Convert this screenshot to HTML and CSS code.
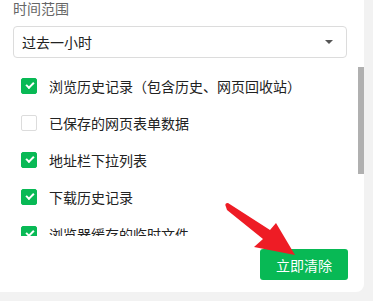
FILE: index.html
```html
<!DOCTYPE html>
<html lang="zh-CN">
  <head>
    <meta charset="UTF-8" />
    <title>清除浏览数据</title>
    <link rel="stylesheet" href="styles.css">
  </head>
  <body>
    <div class="panel">
      <div class="label">时间范围</div>
      <div class="select">
        <span>过去一小时</span>
        <span class="caret"></span>
      </div>

      <div class="list">
        <div class="row"><span class="box checked"></span>浏览历史记录（包含历史、网页回收站）</div>
        <div class="row"><span class="box"></span>已保存的网页表单数据</div>
        <div class="row"><span class="box checked"></span>地址栏下拉列表</div>
        <div class="row"><span class="box checked"></span>下载历史记录</div>
        <div class="row"><span class="box checked"></span>浏览器缓存的临时文件</div>
        <div class="thumb"></div>
      </div>

      <div class="footer">
        <button class="clear">立即清除</button>
      </div>

      <!-- 红色箭头 -->
      <svg class="arrow" width="80" height="60" viewBox="0 0 80 60">
        <path d="M2 8 Q0 4 4 4 L46 31 L52 24 L71 56 L30 48 L39 40 L3 11 Z" fill="#ee1c25" />
      </svg>
    </div>
  </body>
</html>
```

FILE: styles.css
```css
body {
  margin: 0;
  background: #f2f2f2;
  font-family: "Noto Sans CJK SC", "Noto Sans", sans-serif;
}
.panel {
  position: relative;
  width: 364px;
  height: 292px;
  box-sizing: border-box;
  background: #fff;
  border-radius: 0 0 8px 0;
  padding: 0 0 0 13px;
}
.label {
  font-size: 14px;
  line-height: 17px;
  color: #666;
}
.select {
  margin-top: 9px;
  width: 334px;
  height: 32px;
  box-sizing: border-box;
  border: 1px solid #dcdcdc;
  border-radius: 4px;
  display: flex;
  align-items: center;
  justify-content: space-between;
  padding: 0 13px 0 8px;
  font-size: 14px;
  color: #222;
}
.caret {
  width: 0;
  height: 0;
  border-left: 4px solid transparent;
  border-right: 4px solid transparent;
  border-top: 4px solid #555;
}
.list {
  position: relative;
  margin-top: 9px;
  margin-left: -13px;
  height: 169px;
  overflow: hidden;
}
.row {
  height: 37px;
  display: flex;
  align-items: center;
  padding-left: 21px;
  font-size: 14px;
  color: #222;
}
.box {
  width: 16px;
  height: 16px;
  box-sizing: border-box;
  border: 1px solid #dcdcdc;
  border-radius: 2px;
  margin-right: 12px;
  position: relative;
}
.box.checked {
  background: #08b955;
  border-color: #08b955;
}
.box.checked::after {
  content: "";
  position: absolute;
  left: 4px;
  top: 3px;
  width: 6px;
  height: 3px;
  border-left: 2px solid #fff;
  border-bottom: 2px solid #fff;
  transform: rotate(-45deg);
}
.thumb {
  position: absolute;
  right: 0;
  top: 0;
  width: 6px;
  height: 107px;
  background: #b0b0b0;
}
.footer {
  display: flex;
  justify-content: flex-end;
  padding: 13px 16px 0 0;
}
.clear {
  width: 88px;
  height: 31px;
  border: none;
  border-radius: 3px;
  background: #08b955;
  color: #fff;
  font-family: inherit;
  font-size: 14px;
  padding: 0;
}
.arrow {
  position: absolute;
  left: 224px;
  top: 199px;
}
```
